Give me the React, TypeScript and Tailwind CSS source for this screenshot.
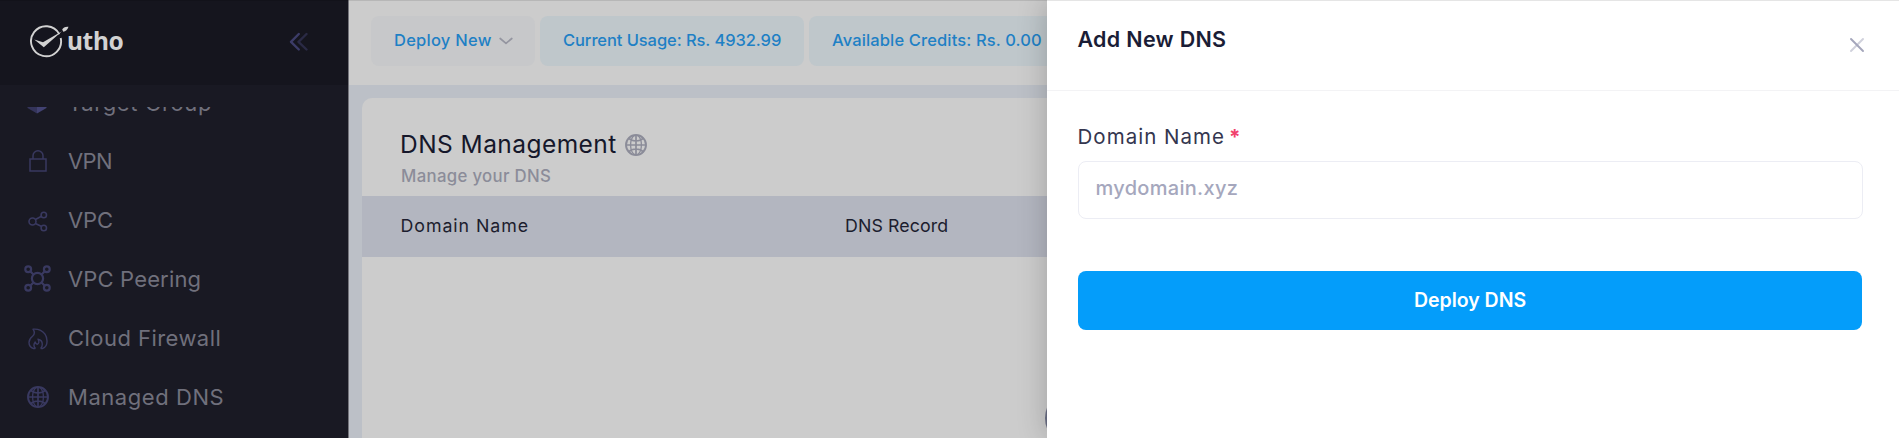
import type { ReactNode } from "react";

function Globe({ className }: { className: string }) {
  return (
    <svg viewBox="0 0 22 22" className={className} fill="none" stroke="currentColor">
      <circle cx="11" cy="11" r="10" strokeWidth="1.900" />
      <path strokeWidth="1.700" d="M11 1v20M1 11h20M3.600 4.200C5.500 6.200 8 7 11 7s5.500-.8 7.400-2.800M3.600 17.800C5.500 15.800 8 15 11 15s5.500.8 7.400 2.800" />
      <path strokeWidth="1.300" d="M9.500 1.300C6.500 3.500 5.600 7 5.600 11s.9 7.500 3.900 9.700M12.500 1.300c3 2.200 3.900 5.700 3.900 9.700s-.9 7.500-3.900 9.700" />
    </svg>
  );
}

function Cube() {
  return (
    <svg viewBox="0 0 20 22" className="ml-[5px] h-[22px] w-5">
      <path d="M10 1 19.500 6 10 11 .5 6Z" fill="#34345a" />
      <path d="M.5 6 10 11v10.500L.5 16Z" fill="#34345a" />
      <path d="M19.500 6 10 11v10.500l9.500-5.500Z" fill="#424272" />
    </svg>
  );
}

function Lock() {
  return (
    <svg viewBox="0 0 18 22" className="ml-[7px] h-[22px] w-[18px]" fill="none" stroke="currentColor" strokeWidth="1.500">
      <path d="M1 9h16v12H1ZM4 9V5.800a5 5 0 0 1 10 0V9" />
    </svg>
  );
}

function Share() {
  return (
    <svg viewBox="0 0 20 21" className="ml-[6px] mt-[3px] h-[21px] w-5" fill="none" stroke="currentColor" strokeWidth="1.600">
      <circle cx="4.500" cy="10.500" r="3.500" />
      <circle cx="15.800" cy="4" r="2.700" />
      <circle cx="15.800" cy="17" r="2.700" />
      <path d="m7.400 8.500 6.100-3.200M7.400 12.500l6.300 3" />
    </svg>
  );
}

function Peering() {
  return (
    <svg viewBox="0 0 27 27" className="ml-[2px] size-[27px]" fill="none" stroke="currentColor" strokeWidth="2.200">
      <circle cx="13.500" cy="13.500" r="5.600" />
      <circle cx="4.200" cy="4.200" r="2.900" />
      <circle cx="22.800" cy="4.200" r="2.900" />
      <circle cx="4.200" cy="22.800" r="2.900" />
      <circle cx="22.800" cy="22.800" r="2.900" />
      <path d="m6.200 6.200 3.500 3.500M20.800 6.200l-3.500 3.500M6.200 20.800l3.500-3.500M20.800 20.800l-3.500-3.500" />
    </svg>
  );
}

function Flame() {
  return (
    <svg viewBox="0 0 20 22" className="ml-[6px] mt-[3px] h-[22px] w-5" fill="none" stroke="currentColor" strokeWidth="1.400" strokeLinejoin="round">
      <path d="M7.300 20.500H5.500C2.500 19.500 1 17 1 14.500c0-3 1.500-4.600 3.500-6.200C6.600 6.500 7 4 5 1.200c5-.4 9.500 1.600 12 5 1.500 2.200 2.100 4.600 2 7.300 0 3.500-1.500 6-4.500 7h-1.800" />
      <path d="M7.500 20.500C5.500 18.500 5.700 16 7.200 14c.3 1.500 1 2.300 2 2.300 1.800-.3 2.300-2.800.8-5.100 2.800.5 4.300 2.400 4.300 5 0 1.800-.6 3.300-1.600 4.300" />
    </svg>
  );
}

function Logo() {
  return (
    <svg viewBox="0 0 40 36" className="h-9 w-10" fill="none">
      <path d="M29.300 10.200A15 15 0 1 0 30.700 14" stroke="#d2d2d2" strokeWidth="1.900" />
      <path d="M4.200 15.600 13 18.300 32 7.200 13.800 23.300Z" fill="#d2d2d2" />
      <path d="M32.200 5.600C33 3.400 35.300 2.400 38.500 2.700 37.600 5.500 35.600 7.700 33.200 7.700Z" fill="#d2d2d2" />
    </svg>
  );
}

function NavRow({ icon, track, className = "", children }: { icon: ReactNode; track: string; className?: string; children: ReactNode }) {
  return (
    <div className={`flex h-[59px] shrink-0 items-center text-[22px] leading-[30px] text-[#70707c] ${className}`}>
      <span className="flex w-[46px] shrink-0 items-center text-[#393960]">{icon}</span>
      <span className={`whitespace-nowrap ${track}`}>{children}</span>
    </div>
  );
}

function Pill({ className, children }: { className: string; children: ReactNode }) {
  return (
    <div className={`flex h-[50px] shrink-0 items-center whitespace-nowrap rounded-lg pb-px pl-[23px] text-[16.500px] font-medium text-[#1e80c5] ${className}`}>
      {children}
    </div>
  );
}

export default function App() {
  return (
    <div className="relative flex h-[438px] w-[1899px] overflow-hidden bg-[#bcc0c7] font-['Inter',sans-serif]">
      <aside className="flex w-[349px] shrink-0 flex-col border-r border-[#74747b] bg-[#191923]">
        <div className="flex h-[85px] items-start bg-[#15151e]">
          <div className="ml-[30px] mt-[24px] flex">
            <Logo />
            <span className="-ml-[3px] h-[32px] w-[60px] font-['Noto_Sans',sans-serif] text-[24.500px] font-bold leading-[33px] tracking-[-0.300px] text-[#d2d2d2]">utho</span>
          </div>
          <svg viewBox="0 0 20 20" className="ml-[161px] mt-[32px] size-5" fill="none" strokeWidth="2.400" strokeLinecap="round" strokeLinejoin="round">
            <path d="M18.500 2 10.500 9.800l8 7.700" stroke="#2a2a45" />
            <path d="M10.800 2 3 9.800l7.800 7.700" stroke="#3c3c68" />
          </svg>
        </div>
        <nav className="mt-[22px] flex h-[331px] flex-col overflow-hidden pl-[22px]">
          <NavRow className="-mt-[35px] pt-[3px]" track="tracking-[0.620px]" icon={<Cube />}>Target Group</NavRow>
          <NavRow track="tracking-[-0.650px]" icon={<Lock />}>VPN</NavRow>
          <NavRow track="tracking-[-0.150px]" icon={<Share />}>VPC</NavRow>
          <NavRow track="tracking-[0.150px]" icon={<Peering />}>VPC Peering</NavRow>
          <NavRow track="tracking-[0.450px]" icon={<Flame />}>Cloud Firewall</NavRow>
          <NavRow track="tracking-[0.550px]" icon={<Globe className="ml-[5px] size-[22px]" />}>Managed DNS</NavRow>
        </nav>
      </aside>

      <main className="flex min-w-0 flex-1 flex-col">
        <header className="flex h-[85px] shrink-0 items-start gap-[5px] bg-[#cccccc] pl-[22px] pt-4">
          <Pill className="w-[164px] gap-[7px] bg-[#c7c8ca] tracking-[0.250px]">
            Deploy New
            <svg viewBox="0 0 14 8" width="14" height="8" className="shrink-0" fill="none" stroke="#9495a0" strokeWidth="1.700" strokeLinecap="round" strokeLinejoin="round">
              <path d="m1.200 1.500 5.800 4.800 5.800-4.800" />
            </svg>
          </Pill>
          <Pill className="w-[264px] bg-[#bfc7cb] tracking-[-0.080px]">Current Usage: Rs. 4932.99</Pill>
          <Pill className="w-[300px] bg-[#bfc7cb] tracking-[0.130px]">Available Credits: Rs. 0.00</Pill>
        </header>
        <section className="ml-[12.500px] mt-[13px] flex flex-1 flex-col rounded-tl-[10px] bg-[#cccccc]">
          <div className="h-[97.500px] shrink-0 pl-[38.500px] pt-[30px]">
            <div className="flex items-center">
              <h1 className="w-[225px] whitespace-nowrap text-[24.500px] leading-[32px] tracking-[0.450px] text-[#15172a]">DNS Management</h1>
              <Globe className="mt-px size-[22px] text-[#8b8c99]" />
            </div>
            <p className="pl-px text-[16.800px] font-medium leading-[33px] tracking-[0.320px] text-[#8b8c99]">Manage your DNS</p>
          </div>
          <div className="flex h-[61px] shrink-0 items-center bg-[#b3b6c0] pl-[39px] text-[17.800px] text-[#1c1d2e]">
            <span className="w-[444.500px] tracking-[0.950px]">Domain Name</span>
            <span className="tracking-[0.100px]">DNS Record</span>
          </div>
        </section>
      </main>

      <div className="absolute left-[1045px] top-[389px] size-[58px] rounded-full bg-[#6b6f85]" />

      <div className="absolute inset-y-0 right-0 flex w-[852.500px] flex-col bg-white shadow-[0_0_28px_rgba(0,0,0,0.220)]">
        <div className="flex h-[91px] shrink-0 items-start justify-between border-b border-[#f3f3f5] pl-[31px] pr-[34px]">
          <h2 className="mt-[23px] text-[21.500px] font-semibold leading-[32px] tracking-[0.300px] text-[#1a1d36]">Add New DNS</h2>
          <svg viewBox="0 0 16 16" className="mt-[37px] size-4" fill="none" strokeWidth="1.900" strokeLinecap="round">
            <path d="M14 2 2 14" stroke="#d0d1dc" />
            <path d="m2 2 12 12" stroke="#a4a6bb" />
          </svg>
        </div>
        <form className="flex flex-col pl-[31px] pr-[36px]">
          <label className="mt-[31px] text-[20.500px] leading-[30px] tracking-[1.030px] text-[#34364f]">
            Domain Name<span className="-ml-px font-bold tracking-normal text-[#f1416c]"> *</span>
          </label>
          <div className="mt-[9px] flex h-[58px] items-center rounded-lg border-[1.500px] border-[#ecedf4] pb-[4px] pl-[17px] text-[20px] font-medium tracking-[0.300px] text-[#a5a7bd]">
            mydomain.xyz
          </div>
          <button type="button" className="ml-[0.500px] mr-[1px] mt-[52px] flex h-[58.500px] items-center justify-center rounded-lg bg-[#049dfa] text-[19.500px] font-semibold tracking-[-0.020px] text-white">
            Deploy DNS
          </button>
        </form>
      </div>
      <div className="absolute inset-x-0 top-0 h-px bg-black/10" />
    </div>
  );
}
